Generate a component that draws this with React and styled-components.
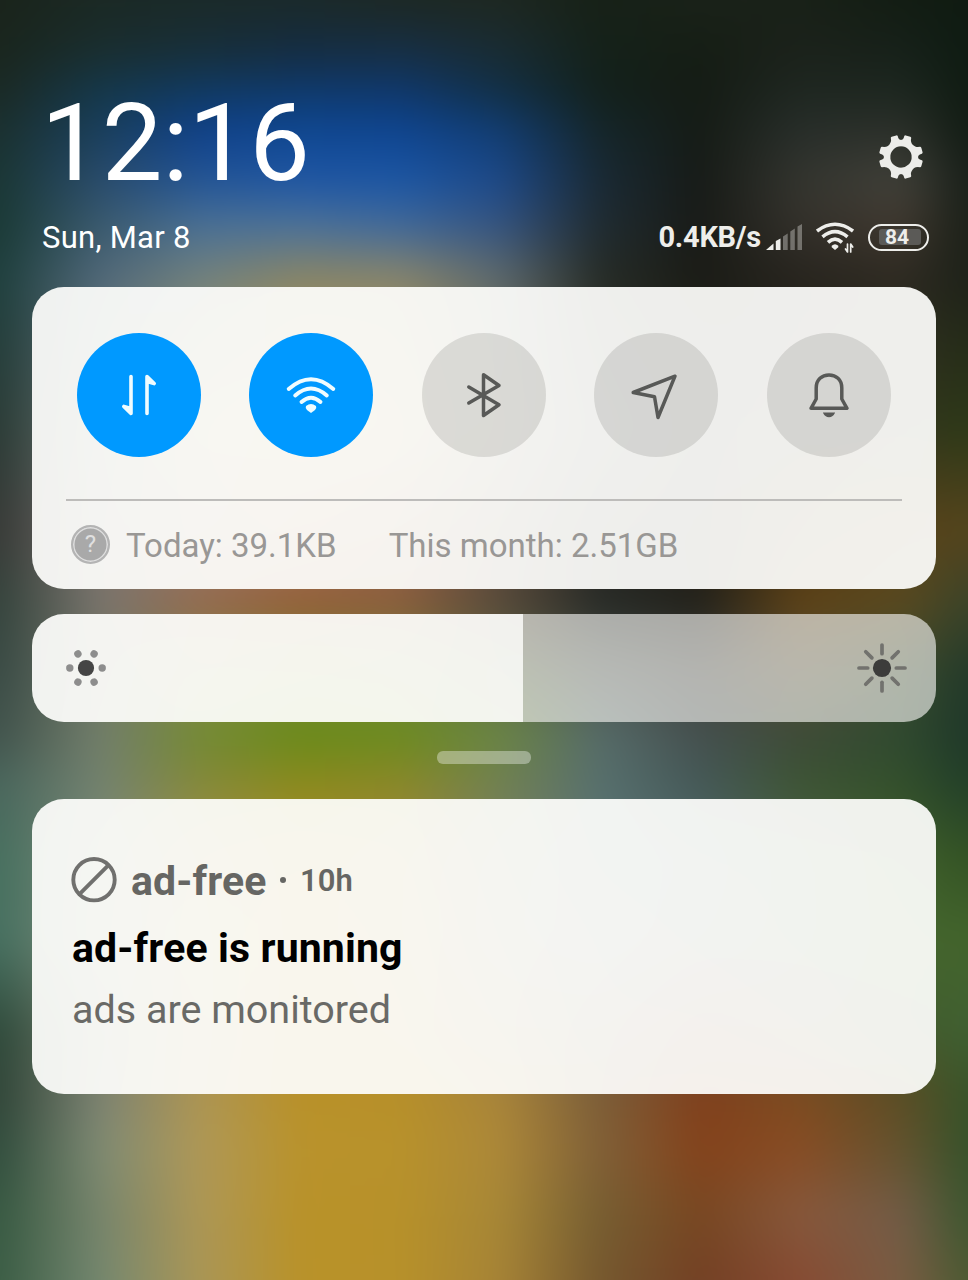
import React from "react";
import styled, { createGlobalStyle } from "styled-components";

const GlobalStyle = createGlobalStyle`
  * { box-sizing: border-box; }
  body { margin: 0; background: #16201b; }
`;

/* Wallpaper colours on a coarse grid, blended in both directions and then
   softened. The layer reaches BLEED pixels past the screen on every side. */
const BLEED = 60;
const STOPS = [0, 100, 200, 300, 400, 500, 600, 700, 800, 900, 968];
const WALLPAPER = [
  { y: 0, c: ["#1a241b", "#1b2924", "#1b2a29", "#1b2a2a", "#1d2824", "#1e2821", "#172117", "#1a2219", "#192118", "#131d13", "#101b12"] },
  { y: 50, c: ["#1a261e", "#1a2e2f", "#182f3a", "#152d42", "#172f44", "#1a2c33", "#15221a", "#161e15", "#1c221b", "#17211a", "#0f1c13"] },
  { y: 90, c: ["#1b2a25", "#15384a", "#113a61", "#103a6c", "#10386b", "#123046", "#14211c", "#151c15", "#1f2721", "#1d2720", "#111c13"] },
  { y: 130, c: ["#1b3130", "#1a3f5c", "#10418a", "#0f4791", "#0f4590", "#123d72", "#15262a", "#161c16", "#282e2a", "#2c302a", "#131d15"] },
  { y: 180, c: ["#1b3735", "#2a4c6c", "#245595", "#1f56a4", "#1c56a4", "#1d4988", "#1a2a35", "#171b17", "#34352f", "#41413a", "#1a201a"] },
  { y: 225, c: ["#1b3a36", "#3a5a6e", "#4a7095", "#4c7299", "#41699a", "#355480", "#202c32", "#191b17", "#34312b", "#40382f", "#1c2119"] },
  { y: 280, c: ["#20403e", "#52697a", "#74827c", "#8c8664", "#8b8669", "#5f6a6b", "#272c26", "#1b1c16", "#27241e", "#2e2a22", "#1e2219"] },
  { y: 430, c: ["#2b3b36", "#6f7c78", "#a39a74", "#b8a266", "#a8946a", "#706a5c", "#3c3f3b", "#252824", "#2f2c1c", "#33351d", "#2e3a18"] },
  { y: 530, c: ["#383a37", "#7b7673", "#9a8270", "#a5785c", "#946a50", "#5d5040", "#2a2b28", "#241f18", "#4a3614", "#5a4319", "#55451d"] },
  { y: 602, c: ["#35443d", "#7a756d", "#93694f", "#945f3a", "#8b5c3c", "#58493a", "#272a26", "#22211a", "#5e4217", "#5a4920", "#3b4429"] },
  { y: 670, c: ["#3a4b45", "#71786b", "#888b4a", "#7d8a30", "#74863b", "#5f6c47", "#4c544e", "#42433f", "#564e34", "#3c4c2e", "#243a2a"] },
  { y: 735, c: ["#42544d", "#727e6b", "#738a35", "#698a1b", "#6b8b20", "#6a8545", "#566b69", "#45504f", "#3e4b38", "#304a30", "#1f3829"] },
  { y: 785, c: ["#4a675d", "#738270", "#85893b", "#8c8a1d", "#8b8828", "#718052", "#57706e", "#455958", "#3e5535", "#34502c", "#234029"] },
  { y: 860, c: ["#47705f", "#7e8c7c", "#a59350", "#b18f2d", "#a78842", "#7b8366", "#5c7477", "#52686a", "#4d6348", "#42602c", "#345425"] },
  { y: 940, c: ["#467060", "#848f7d", "#ab9956", "#b7932f", "#ad8c42", "#868069", "#6a7478", "#5c6460", "#4e6348", "#46662f", "#43652c"] },
  { y: 1030, c: ["#2f4a3b", "#77806f", "#aa9557", "#b9912b", "#b38b39", "#947d50", "#6f6351", "#6f4a32", "#605437", "#435a2c", "#406032"] },
  { y: 1095, c: ["#314639", "#7d8373", "#ad9553", "#b99129", "#b79029", "#a9853a", "#7c5e38", "#80401d", "#7d4b20", "#5d4d25", "#385329"] },
  { y: 1150, c: ["#324e3e", "#7f8b74", "#af9857", "#b9932c", "#b8922c", "#ac8839", "#806038", "#84431c", "#884d25", "#64532f", "#37522b"] },
  { y: 1215, c: ["#385a43", "#77856d", "#ad9756", "#b99229", "#b7912a", "#a78737", "#765e32", "#784722", "#87583c", "#735c47", "#3e5730"] },
  { y: 1280, c: ["#3b5d45", "#748770", "#aa9656", "#b99229", "#b7912a", "#a68336", "#75582f", "#734024", "#874b33", "#7a5c43", "#4d5a33"] },
];

const Screen = styled.main`
  position: relative;
  isolation: isolate;
  width: 968px;
  height: 1280px;
  overflow: hidden;
  padding: 0 32px;
  display: flex;
  flex-direction: column;
  font-family: Roboto, sans-serif;
`;

const Wallpaper = styled.div`
  position: absolute;
  inset: -${BLEED}px;
  z-index: -1;
  filter: blur(16px);
`;

const Band = styled.div`
  position: absolute;
  inset: 0;
  background: linear-gradient(
    90deg,
    ${({ $colors }) => $colors.map((c, i) => `${c} ${STOPS[i] + BLEED}px`).join(", ")}
  );
  mask-image: ${({ $from, $to }) =>
    $to === 0
      ? "none"
      : `linear-gradient(180deg, transparent ${$from + BLEED}px, #000 ${$to + BLEED}px)`};
`;

const Header = styled.header`
  height: 287px;
  padding: 88px 7px 0 10px;
  color: #fff;
`;

const ClockRow = styled.div`
  height: 124px;
  display: flex;
  justify-content: space-between;
  align-items: flex-start;
`;

const Clock = styled.div`
  font-size: 108px;
  line-height: 106px;
  margin: 2px 0 0 -1px;
`;

const SettingsButton = styled.button`
  border: 0;
  padding: 0;
  margin: 46px 5px 0 0;
  background: none;
  color: #ecece9;
  svg { display: block; }
`;

const StatusRow = styled.div`
  display: flex;
  justify-content: space-between;
  align-items: center;
  height: 50px;
`;

const DateText = styled.div`
  font-size: 31px;
  letter-spacing: 0.27px;
`;

const StatusIcons = styled.div`
  display: flex;
  align-items: center;
  color: #eeeeeb;
  svg { display: block; }
`;

const NetSpeed = styled.span`
  font-size: 29px;
  font-weight: 700;
  letter-spacing: -0.25px;
  margin: 0 5px 0 0;
`;

const WifiSlot = styled.span`
  margin-left: 14px;
`;

const Battery = styled.div`
  width: 61px;
  height: 27px;
  margin-left: 14px;
  padding: 3px 0 0 9px;
  border: 2.5px solid #ededea;
  border-radius: 14px;
  display: flex;
`;

const BatteryLevel = styled.div`
  width: 42px;
  height: 16px;
  border-radius: 3px;
  background: #5b5a57;
  font-size: 21px;
  font-weight: 700;
  line-height: 17px;
  padding-left: 6px;
`;

const Card = styled.section`
  border-radius: 32px;
  background: rgba(254, 254, 252, 0.93);
  overflow: hidden;
  flex: none;
`;

const QuickSettings = styled(Card)`
  height: 302px;
  padding: 45.5px 34px 0;
`;

const Toggles = styled.div`
  display: flex;
  justify-content: space-between;
  padding: 0 11.4px 0 10.5px;
  height: 166.5px;
`;

const Toggle = styled.button`
  width: 124px;
  height: 124px;
  padding: 0;
  border: 0;
  border-radius: 50%;
  background: ${({ $on }) => ($on ? "#0099ff" : "rgba(90, 90, 84, 0.17)")};
  color: ${({ $on }) => ($on ? "#f0fcff" : "#585957")};
  svg { display: block; }
`;

const Usage = styled.div`
  height: 90px;
  border-top: 2px solid #bdbcba;
  display: flex;
  align-items: center;
  padding-left: 5px;
  color: #999795;
  font-size: 33px;
`;

const UsageText = styled.span`
  margin-left: ${({ $gap }) => $gap}px;
  white-space: nowrap;
  padding-top: 1px;
`;

const HelpBadge = styled.span`
  width: 39px;
  height: 39px;
  margin-bottom: 1px;
  border-radius: 50%;
  background: #a9a9a9;
  border: 2px solid #b4b4b4;
  box-shadow: inset 0 0 0 1.5px #dedede;
  color: #e0e0e0;
  font-size: 24px;
  line-height: 35px;
  text-align: center;
`;

const Brightness = styled.section`
  flex: none;
  height: 107.5px;
  margin-top: 25px;
  border-radius: 32px;
  overflow: hidden;
  display: flex;
  svg { display: block; }
`;

const BrightnessLevel = styled.div`
  width: 491.4px;
  padding: 32px 0 0 32px;
  background: rgba(254, 254, 252, 0.93);
`;

const BrightnessRest = styled.div`
  flex: 1;
  display: flex;
  justify-content: flex-end;
  padding: 27px 27px 0 0;
  background: rgba(238, 238, 236, 0.66);
`;

const Handle = styled.div`
  flex: none;
  width: 94px;
  height: 13px;
  margin: 29.5px auto 34.5px;
  border-radius: 6px;
  background: rgba(255, 255, 255, 0.36);
`;

const Notification = styled(Card)`
  height: 295.5px;
  padding: 56px 40px 0 39px;
  svg { display: block; }
`;

const AppLine = styled.div`
  display: flex;
  align-items: center;
  height: 50px;
  color: #666663;
  font-weight: 700;
`;

const AppName = styled.span`
  font-size: 41px;
  letter-spacing: 0.1px;
  margin: 3px 0 0 14px;
`;

const Dot = styled.span`
  width: 6px;
  height: 6px;
  border-radius: 50%;
  background: currentColor;
  margin: 1px 14px 0 13.5px;
`;

const Age = styled.span`
  font-size: 31px;
  font-weight: 600;
  margin-top: 2px;
`;

const Title = styled.h1`
  margin: 19px 0 0 1px;
  font-size: 41px;
  line-height: 48px;
  letter-spacing: 0.13px;
  font-weight: 700;
  color: #000;
`;

const Message = styled.p`
  margin: 14px 0 0 1px;
  font-size: 39.5px;
  line-height: 48px;
  color: #696966;
`;

const line = { fill: "none", stroke: "currentColor", strokeLinecap: "round", strokeLinejoin: "round" };

/* One quarter of the gear's outline, turned four times around a round hole. */
const GearIcon = () => (
  <svg width="46" height="46" viewBox="-23 -23 46 46" fill="currentColor">
    {[0, 90, 180, 270].map((a) => (
      <path
        key={a}
        transform={`rotate(${a})`}
        d="M-.3-10.700V-17Q1.800-16.900 2.600-18.800L3.300-20.900Q3.700-21.800 4.700-21.600L9.300-20.300Q10.300-19.900 10.200-18.900L9.900-16.800Q9.900-12.500 14.200-10.600Q15.500-9.900 16.800-9.900L18.900-10.200Q19.900-10.300 20.300-9.300L21.600-4.700Q21.800-3.700 20.900-3.300L18.800-2.600Q16.900-1.800 17 .3H10.700A10.700 10.700 0 0 0-.3-10.700Z"
      />
    ))}
  </svg>
);

const SignalIcon = () => (
  <svg width="36" height="27" viewBox="0 0 36 27" fill="currentColor">
    <path d="M0 26 7.500 19.500V26Z" />
    <path d="M9.800 17 14.500 14.500V26H9.800Z" />
    <path d="M17 12.500 21.700 9.500V26H17ZM24.300 7.500 28.800 4.500V26H24.300ZM31.500 2.500 36 0V26H31.500Z" opacity=".36" />
  </svg>
);

const StatusWifiIcon = () => (
  <svg width="38" height="32" viewBox="0 0 38 32">
    <g {...line} strokeLinecap="butt" strokeWidth="3.600">
      <path d="M1 10Q19-3.500 37 10" />
      <path d="M6.500 15.800Q19 5.600 31.500 15.800" />
      <path d="M12 21.300Q19 15 26 21.300" />
    </g>
    <path d="M15.700 24.800Q19 21.800 22.300 24.800V26.200L19 29L15.700 26.200Z" fill="currentColor" />
    <path d="M31.500 23V31L29.500 28M34.700 31V23L36.700 26" {...line} strokeWidth="1.700" />
  </svg>
);

const DataIcon = () => (
  <svg width="124" height="124" viewBox="0 0 124 124">
    <path d="M54 43.500V80.500L46.800 73.400L54 75.500M70 80.500V43.500L77.200 50.600L70 48.500" {...line} fill="currentColor" strokeWidth="3.600" />
  </svg>
);

const WifiIcon = () => (
  <svg width="124" height="124" viewBox="0 0 124 124">
    <g {...line} strokeWidth="3.900">
      <path d="M39.700 56Q62 36.500 84.300 56" />
      <path d="M46.200 62.500Q62 48.500 77.800 62.500" />
      <path d="M52.500 69Q62 60.500 71.500 69" />
    </g>
    <path d="M57 73Q62 69 67 73Q68 75 66 77L62 80L58 77Q56 75 57 73Z" fill="currentColor" />
  </svg>
);

const BluetoothIcon = () => (
  <svg width="124" height="124" viewBox="0 0 124 124">
    <path d="M46.800 54 77 71.800 61.500 82.500V41.800L77 52.500 46.800 70" {...line} strokeWidth="3.500" />
  </svg>
);

const LocationIcon = () => (
  <svg width="124" height="124" viewBox="0 0 124 124">
    <path d="M81 43.200 39.200 59.500 60.500 63.800 64 84.500Z" {...line} strokeWidth="3.500" />
  </svg>
);

const BellIcon = () => (
  <svg width="124" height="124" viewBox="0 0 124 124">
    <path d="M44 75.300 49.200 66V55C49.200 46.500 55 42 62 42S74.800 46.500 74.800 55V66L80 75.300Z" {...line} strokeWidth="3.500" />
    <path d="M55.800 79.500H68.200Q66 84.300 62 84.300T55.800 79.500Z" fill="currentColor" />
  </svg>
);

const DimIcon = () => (
  <svg width="44" height="44" viewBox="-22 -22 44 44">
    <circle r="8.100" fill="#454545" />
    {[0, 60, 120, 180, 240, 300].map((a) => (
      <circle key={a} cx="16.200" r="3.700" fill="#8d8d8d" transform={`rotate(${a})`} />
    ))}
  </svg>
);

const BrightIcon = () => (
  <svg width="54" height="54" viewBox="-27 -27 54 54">
    <circle r="9.100" fill="#3c3c3b" />
    {[0, 45, 90, 135, 180, 225, 270, 315].map((a) => (
      <path key={a} d="M14.300 0H23" stroke="#72726e" strokeWidth="3.700" strokeLinecap="round" transform={`rotate(${a})`} />
    ))}
  </svg>
);

const BlockedIcon = () => (
  <svg width="46" height="46" viewBox="0 0 46 46" color="#70706e">
    <circle cx="23" cy="22.700" r="20.700" {...line} strokeWidth="3.900" />
    <path d="M9 36.700 37 8.700" {...line} strokeWidth="3.900" />
  </svg>
);

const TOGGLES = [
  { name: "Mobile data", on: true, Icon: DataIcon },
  { name: "Wi-Fi", on: true, Icon: WifiIcon },
  { name: "Bluetooth", on: false, Icon: BluetoothIcon },
  { name: "Location", on: false, Icon: LocationIcon },
  { name: "Ringer", on: false, Icon: BellIcon },
];

export default function App() {
  return (
    <Screen>
      <GlobalStyle />
      <Wallpaper>
        {WALLPAPER.map((row, i) => (
          <Band key={row.y} $colors={row.c} $from={i ? WALLPAPER[i - 1].y : 0} $to={row.y} />
        ))}
      </Wallpaper>

      <Header>
        <ClockRow>
          <Clock>12:16</Clock>
          <SettingsButton aria-label="Settings"><GearIcon /></SettingsButton>
        </ClockRow>
        <StatusRow>
          <DateText>Sun, Mar 8</DateText>
          <StatusIcons>
            <NetSpeed>0.4KB/s</NetSpeed>
            <SignalIcon />
            <WifiSlot><StatusWifiIcon /></WifiSlot>
            <Battery><BatteryLevel>84</BatteryLevel></Battery>
          </StatusIcons>
        </StatusRow>
      </Header>

      <QuickSettings>
        <Toggles>
          {TOGGLES.map(({ name, on, Icon }) => (
            <Toggle key={name} $on={on} aria-label={name}><Icon /></Toggle>
          ))}
        </Toggles>
        <Usage>
          <HelpBadge>?</HelpBadge>
          <UsageText $gap={16}>Today: 39.1KB</UsageText>
          <UsageText $gap={52}>This month: 2.51GB</UsageText>
        </Usage>
      </QuickSettings>

      <Brightness>
        <BrightnessLevel><DimIcon /></BrightnessLevel>
        <BrightnessRest><BrightIcon /></BrightnessRest>
      </Brightness>

      <Handle />

      <Notification>
        <AppLine>
          <BlockedIcon />
          <AppName>ad-free</AppName>
          <Dot />
          <Age>10h</Age>
        </AppLine>
        <Title>ad-free is running</Title>
        <Message>ads are monitored</Message>
      </Notification>
    </Screen>
  );
}
